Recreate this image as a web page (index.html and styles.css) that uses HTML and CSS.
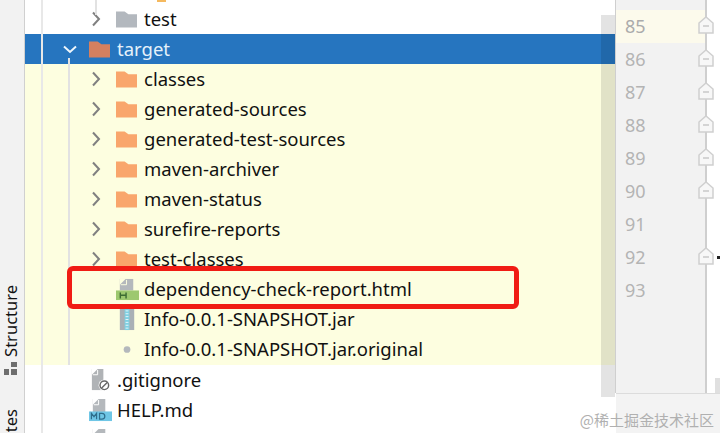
FILE: index.html
```html
<!DOCTYPE html>
<html lang="en">
<head>
<meta charset="UTF-8"/>
<title>Project tree</title>
<link rel="stylesheet" href="styles.css">
</head>
<body>
<svg class="defs" width="0" height="0">
  <symbol id="folder" viewBox="0 0 22 17">
    <path d="M0 0h9l4 3h9v14H0z"/>
  </symbol>
  <symbol id="open" viewBox="0 0 10 16">
    <path d="M2 1.500l6 6.500-6 6.500" fill="none" stroke="currentColor" stroke-width="2"/>
  </symbol>
  <symbol id="down" viewBox="0 0 14 9">
    <path d="M1 1.500l6 5.500 6-5.500" fill="none" stroke="currentColor" stroke-width="2"/>
  </symbol>
  <symbol id="fold" viewBox="0 0 16 18">
    <path d="M1 7l7-6 7 6v10H1z" fill="#f7f7f7" stroke="#cfcfcf" stroke-width="1.5"/>
    <path d="M5 10h6" stroke="#bdbdbd" stroke-width="1.2"/>
  </symbol>
</svg>

<div class="app">
  <!-- Left tool strip -->
  <div class="strip">
    <span class="strip-label strip-fav">Favorites</span>
    <svg class="strip-icon" viewBox="0 0 14 14"><path d="M0 7h5v6H0zM7 0h6v5H7zM7 7h6v6H7z" fill="#6e6e6e"/></svg>
    <span class="strip-label">Structure</span>
  </div>

  <!-- Project tree -->
  <div class="tree">
    <div class="guide guide-a"></div>
    <div class="guide guide-b"></div>
    <div class="guide guide-c"></div>

    <div class="row"><svg class="arrow"><use href="#open"/></svg><svg class="folder folder-gray"><use href="#folder"/></svg><span>test</span></div>

    <div class="row row-selected"><svg class="arrow-down"><use href="#down"/></svg><svg class="folder folder-sel"><use href="#folder"/></svg><span>target</span></div>

    <div class="excluded">
      <div class="row"><svg class="arrow"><use href="#open"/></svg><svg class="folder"><use href="#folder"/></svg><span>classes</span></div>
      <div class="row"><svg class="arrow"><use href="#open"/></svg><svg class="folder"><use href="#folder"/></svg><span>generated-sources</span></div>
      <div class="row"><svg class="arrow"><use href="#open"/></svg><svg class="folder"><use href="#folder"/></svg><span>generated-test-sources</span></div>
      <div class="row"><svg class="arrow"><use href="#open"/></svg><svg class="folder"><use href="#folder"/></svg><span>maven-archiver</span></div>
      <div class="row"><svg class="arrow"><use href="#open"/></svg><svg class="folder"><use href="#folder"/></svg><span>maven-status</span></div>
      <div class="row"><svg class="arrow"><use href="#open"/></svg><svg class="folder"><use href="#folder"/></svg><span>surefire-reports</span></div>
      <div class="row"><svg class="arrow"><use href="#open"/></svg><svg class="folder"><use href="#folder"/></svg><span>test-classes</span></div>
      <div class="row row-file">
        <svg class="file-icon" viewBox="0 0 24 24"><path d="M4 1h14v12H4z" fill="#b4b8bc"/><path d="M4 1h6L4 7z" fill="#fdfee0"/><path d="M11 2v5H5" fill="none" stroke="#fdfee0" stroke-width="1"/><path d="M0 13h24v10H0z" fill="#9dc86f"/><path d="M4.500 15v6.500M10.500 15v6.500M4.500 18h6" stroke="#3d6b33" stroke-width="1.500"/></svg>
        <span>dependency-check-report.html</span>
      </div>
      <div class="row row-file">
        <svg class="file-icon" viewBox="0 0 24 24"><path d="M4 1h15v22H4z" fill="#a9b0b6"/><path d="M9 1h5v22H9z" fill="#7fd0e2"/><path d="M10 3h3M10 6h3M10 9h3M10 12h3M10 15h3M10 18h3M10 21h3" stroke="#e6f6fa" stroke-width="1"/></svg>
        <span>Info-0.0.1-SNAPSHOT.jar</span>
      </div>
      <div class="row row-file">
        <svg class="file-icon" viewBox="0 0 24 24"><circle cx="11.500" cy="12" r="3.500" fill="#b4b8bc"/></svg>
        <span>Info-0.0.1-SNAPSHOT.jar.original</span>
      </div>
    </div>

    <div class="row row-root">
      <svg class="file-icon" viewBox="0 0 24 24"><path d="M3 0h12v22H3z" fill="#b0b3b6"/><path d="M3 0h6L3 6z" fill="#fff"/><path d="M9 1v5H4" fill="none" stroke="#fff"/><circle cx="16" cy="17" r="6" fill="#fff"/><circle cx="16" cy="17" r="4.500" fill="none" stroke="#666" stroke-width="1.500"/><path d="M13 20l6-6" stroke="#666" stroke-width="1.500"/></svg>
      <span>.gitignore</span>
    </div>
    <div class="row row-root">
      <svg class="file-icon" viewBox="0 0 24 24"><path d="M4 0h13v14H4z" fill="#b4b8bc"/><path d="M4 0h6L4 6z" fill="#fff"/><path d="M10 1v5H5" fill="none" stroke="#fff"/><path d="M0 13h24v10H0z" fill="#6fc6e6"/><path d="M2.500 21v-6l2.700 3.500 2.700-3.500v6M11 15v6h2.500c4 0 4-6 0-6z" fill="none" stroke="#2f6e8c" stroke-width="1.300"/></svg>
      <span>HELP.md</span>
    </div>
    <div class="row row-root">
      <svg class="file-icon" viewBox="0 0 24 24"><path d="M4 0h13v24H4z" fill="#b4b8bc"/><path d="M4 0h6L4 6z" fill="#fff"/></svg>
      <span>Info.iml</span>
    </div>

    <div class="cut-icon"></div>
    <div class="scrollbar"></div>
    <div class="red-box"></div>
  </div>

  <!-- Editor gutter -->
  <div class="gutter">
    <div class="line current"><span>85</span><svg class="fold"><use href="#fold"/></svg></div>
    <div class="line"><span>86</span><svg class="fold"><use href="#fold"/></svg></div>
    <div class="line"><span>87</span><svg class="fold"><use href="#fold"/></svg></div>
    <div class="line"><span>88</span><svg class="fold"><use href="#fold"/></svg></div>
    <div class="line"><span>89</span><svg class="fold"><use href="#fold"/></svg></div>
    <div class="line"><span>90</span><svg class="fold"><use href="#fold"/></svg></div>
    <div class="line"><span>91</span></div>
    <div class="line"><span>92</span><svg class="fold"><use href="#fold"/></svg></div>
    <div class="line"><span>93</span></div>
  </div>

  <div class="editor"></div>
  <div class="code-mark"></div>
  <div class="editor-scroll"></div>
  <div class="bottom-bar"></div>
  <div class="watermark">@稀土掘金技术社区</div>
</div>
</body>
</html>
```

FILE: styles.css
```css
/* Global */
html, body {
  margin:0; padding:0; width:100%; height:100%;
  background:#fff;
  overflow:hidden;
  font-family:"Noto Sans", sans-serif;
}
.defs { position:absolute; }

.app {
  position:relative;
  display:flex;
  width:720px;
  height:433px;
  overflow:hidden;
}

/* Left strip */
.strip {
  width:24px;
  height:433px;
  flex-shrink:0;
  background:#f2f2f2;
  border-right:1px solid #d0d0d0;
  display:flex;
  flex-direction:column-reverse;
  align-items:center;
}
.strip-label {
  writing-mode:vertical-rl;
  transform:rotate(180deg);
  font-size:16.5px;
  line-height:20px;
  color:#111;
  flex-shrink:0;
  margin-right:3px;
}
.strip-fav { margin-bottom:-46px; }
.strip-icon { width:14px; height:14px; margin:5px 5px 33px 2px; flex-shrink:0; }

/* Tree */
.tree {
  position:relative;
  width:590px;
  flex-shrink:0;
  padding-top:4px;
  box-sizing:border-box;
  overflow:hidden;
}
.row {
  position:relative;
  height:30px;
  display:flex;
  align-items:center;
  padding-left:66px;
  font-size:18.5px;
  color:#111;
  white-space:nowrap;
}
.row span { margin:-2px 0 0 7px; }
.excluded { background:#fdfee0; height:301px; }
.row-selected {
  background:#2675bf;
  color:#e5f1fa;
  padding-left:38px;
}
.row-root { padding-left:64px; }
.row-file span, .row-root span { margin-left:5px; }

.arrow, .arrow-down { flex-shrink:0; }
.arrow {
  width:10px; height:16px;
  margin-right:15px;
  color:#808080;
}
.arrow-down {
  width:14px; height:9px;
  margin-right:12px;
  color:#eef6fc;
}

.folder {
  width:21px; height:17px;
  fill:#f9a66c;
  flex-shrink:0;
}
.folder-gray { fill:#b3b8be; }
.folder-sel { fill:#d5805f; }

.file-icon { width:23px; height:23px; flex-shrink:0; }
.row-file .file-icon { margin-left:25px; }

/* Indent guides */
.guide { position:absolute; width:2px; background:#e2e2e2; z-index:1; }
.guide-a { left:16px; top:0; height:433px; background:#e8e8e8; }
.guide-b { left:43px; top:58px; height:307px; }
.guide-c { left:70px; top:0; height:15px; }

.cut-icon {
  position:absolute;
  left:132px; top:0;
  width:9px; height:2px;
  background:#f5b95f;
}

/* Scrollbar lies over the rows, so they tint it */
.scrollbar {
  position:absolute;
  right:0; top:15px;
  width:14px;
  height:382px;
  background:rgba(0,0,0,0.11);
  z-index:2;
}

/* Annotation */
.red-box {
  position:absolute;
  left:42px; top:266px;
  width:442px; height:33px;
  border:5px solid #f01c14;
  border-radius:6px;
  z-index:3;
}

/* Gutter */
.gutter {
  width:92px;
  flex-shrink:0;
  background:#f2f2f2;
  border-left:1px solid #cfcfcf;
  border-right:2px solid #cfcfcf;
  padding-top:10px;
  box-sizing:border-box;
  height:393px;
  position:relative;
}
.line {
  position:relative;
  height:33px;
  font-size:18px;
  line-height:33px;
  padding-left:9px;
  color:#b4b4b4;
}
.line.current { background:#fcfaec; color:#ababab; }
.fold {
  position:absolute;
  right:-9px; top:6px;
  width:16px; height:18px;
}

.editor { flex:1; background:#fff; }

.code-mark {
  position:absolute;
  left:717px; top:256px;
  width:3px; height:3px;
  background:#222;
}
.editor-scroll {
  position:absolute;
  left:715px; top:378px;
  width:5px; height:15px;
  background:#e0e0e0;
}

.bottom-bar {
  position:absolute;
  left:616px; right:0; top:393px; bottom:0;
  background:#f3f3f3;
  border-top:1px solid #dcdcdc;
}
.watermark {
  position:absolute;
  right:6px; bottom:3px;
  font-family:"Noto Sans CJK SC", sans-serif;
  font-size:15px;
  color:#b0b0b0;
  white-space:nowrap;
}
```
